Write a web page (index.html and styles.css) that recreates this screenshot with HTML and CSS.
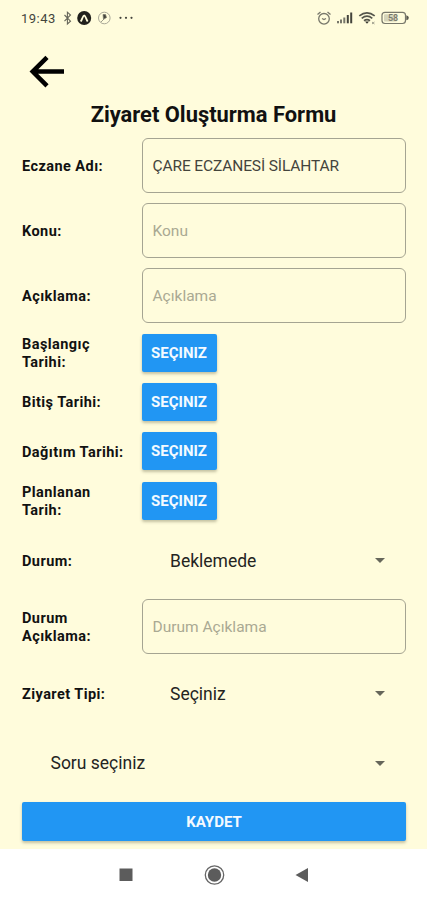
FILE: index.html
```
<!DOCTYPE html>
<html lang="tr">
<head>
<meta charset="utf-8">
<title>Ziyaret Oluşturma Formu</title>
<link rel="stylesheet" href="styles.css">
</head>
<body>
<div class="screen">
  <header class="status">
    <span class="time">19:43</span>
    <svg class="status-left" width="74" height="16" viewBox="62 10 74 16">
      <path d="M64.5 15l6 6.2-3.1 2.8V12.2l3.1 2.8-6 6.2" fill="none" stroke="#66665a" stroke-width="1.1"/>
      <circle cx="84.2" cy="18" r="7" fill="#20201c"/>
      <path d="M80.7 21.5c1.4-2 2.2-6 3.5-6s2.1 4 3.5 6" fill="none" stroke="#fffcdc" stroke-width="1.8"/>
      <circle cx="104.3" cy="18" r="5.8" fill="none" stroke="#aaa998" stroke-width="1"/>
      <path d="M103 14.5h2.5l1 3-3 1.8zM104 19l-3 3" fill="#44443c" stroke="#77776a" stroke-width=".7"/>
      <g fill="#44443c"><circle cx="120.5" cy="17.8" r="1.1"/><circle cx="126" cy="17.8" r="1.1"/><circle cx="131.5" cy="17.8" r="1.1"/></g>
    </svg>
    <svg class="status-right" width="96" height="16" viewBox="314 10 96 16">
      <g fill="none" stroke="#77776a" stroke-width="1.3">
        <circle cx="324" cy="18.8" r="5.3"/>
        <path d="M317.5 14.5l3-2.500M330.500 14.500l-3-2.500M322 18.500l2 1 2-1"/>
      </g>
      <g fill="#77776a"><rect x="337" y="21" width="2" height="2.300"/><rect x="340" y="19.500" width="2" height="3.800"/><rect x="343.300" y="17.500" width="2" height="5.800"/></g>
      <g fill="#44443c"><rect x="346.800" y="15" width="2" height="8.300"/><rect x="350.200" y="12.500" width="2" height="10.800"/></g>
      <g fill="none" stroke="#55554b" stroke-width="1.700">
        <path d="M359.300 15.800q7.700-6 15.400 0M361.700 18.300q5.300-4.200 10.600 0M364 20.700q3-2.200 6 0"/>
      </g>
      <path d="M365 21.500h4l-2 2.200z" fill="#33332d"/>
      <path d="M372 22l2.500 2M374.500 22l-2.500 2" stroke="#88887a" stroke-width=".8"/>
      <rect x="382" y="12.300" width="23.500" height="11.200" rx="3" fill="none" stroke="#77776a" stroke-width="1.200"/>
      <rect x="384" y="14.200" width="13" height="7.400" rx="1" fill="#d5d4ba"/>
      <path d="M406.300 15.300q2.500.5 2.500 2.500t-2.500 2.500z" fill="#55554b"/>
      <text class="battery" x="388" y="21.300">58</text>
    </svg>
  </header>
  <div class="back">
    <svg width="36" height="34" viewBox="0 0 36 34"><path d="M35 16.600H3M18 2.300L3.700 16.600l14.300 14.300" fill="none" stroke="#000" stroke-width="4.500"/></svg>
  </div>
  <h1 class="title">Ziyaret Oluşturma Formu</h1>
  <main class="form">
    <div class="row"><label class="label">Eczane Adı:</label><div class="input filled">ÇARE ECZANESİ SİLAHTAR</div></div>
    <div class="row"><label class="label">Konu:</label><div class="input">Konu</div></div>
    <div class="row"><label class="label">Açıklama:</label><div class="input">Açıklama</div></div>
    <div class="row date"><label class="label">Başlangıç<br>Tarihi:</label><button class="button">SEÇINIZ</button></div>
    <div class="row date"><label class="label">Bitiş Tarihi:</label><button class="button">SEÇINIZ</button></div>
    <div class="row date"><label class="label">Dağıtım Tarihi:</label><button class="button">SEÇINIZ</button></div>
    <div class="row date"><label class="label">Planlanan<br>Tarih:</label><button class="button">SEÇINIZ</button></div>
    <div class="row state"><label class="label">Durum:</label><div class="select"><span>Beklemede</span><i class="caret"></i></div></div>
    <div class="row note"><label class="label">Durum<br>Açıklama:</label><div class="input">Durum Açıklama</div></div>
    <div class="row kind"><label class="label">Ziyaret Tipi:</label><div class="select"><span>Seçiniz</span><i class="caret"></i></div></div>
    <div class="select question"><span>Soru seçiniz</span><i class="caret"></i></div>
    <button class="button save">KAYDET</button>
  </main>
  <nav class="nav">
    <svg width="200" height="24" viewBox="0 0 200 24">
      <rect x="5.500" y="5.500" width="13" height="12.500" fill="#5c5c5c"/>
      <circle cx="100.500" cy="12" r="9.200" fill="none" stroke="#666" stroke-width="1.300"/>
      <circle cx="100.500" cy="12" r="6.700" fill="#5c5c5c"/>
      <path d="M181.500 12l12.500-7v14z" fill="#5c5c5c"/>
    </svg>
  </nav>
</div>
</body>
</html>
```
FILE: styles.css
```
* { box-sizing: border-box; }
body { margin: 0; font-family: Roboto, "Noto Sans", sans-serif; color: #111; }
.screen { width: 427px; height: 900px; display: flex; flex-direction: column; background: #fffcdc; overflow: hidden; }
.status { height: 36px; padding: 0 17px 0 21px; display: flex; align-items: center; flex: none; }
.time { width: 41px; font-size: 13px; letter-spacing: .5px; color: #44443c; }
.status-right { margin-left: auto; }
.battery { font-size: 9px; font-weight: 500; fill: #77776a; }
.back { height: 63px; padding: 19px 0 0 29px; flex: none; }
.back svg { display: block; }
.title { margin: 0; height: 34px; line-height: 31px; font-size: 21.900px; font-weight: 700; text-align: center; flex: none; }
.form { height: 716px; padding: 0 21px 0 22px; flex: none; }
.row { height: 65px; display: grid; grid-template-columns: 119.500px 1fr; align-items: center; }
.label { font-size: 14.500px; line-height: 18px; font-weight: 700; white-space: nowrap; letter-spacing: .44px; padding-top: 3px; }
.input { height: 55px; padding: 1px 10px 0; display: flex; align-items: center; border: 1px solid #a5a492; border-radius: 6px; font-size: 15.500px; color: #aaa993; }
.filled { color: #44443c; letter-spacing: -.12px; }
.row.date { height: 49.300px; }
.button { border: 0; padding: 0; width: 75px; height: 38px; border-radius: 2px; background: #2196f3; color: #f4faff; font: 700 15px Roboto, sans-serif; box-shadow: 0 2px 3px rgba(60,60,30,.3); }
.row.state { height: 71.300px; }
.row.note { height: 61px; }
.row.kind { height: 73px; }
.select { display: flex; justify-content: space-between; align-items: center; padding: 0 21px 0 28.500px; font-size: 17.500px; color: #24241f; }
.caret { width: 0; height: 0; border: 5.500px solid transparent; border-top-color: #66665a; border-bottom: 0; }
.question { height: 65.700px; }
.save { display: block; width: 100%; height: 39px; margin-top: 6px; font-size: 15px; }
.nav { flex: 1; background: #fff; display: flex; justify-content: center; align-items: center; padding-top: 1px; }
```
